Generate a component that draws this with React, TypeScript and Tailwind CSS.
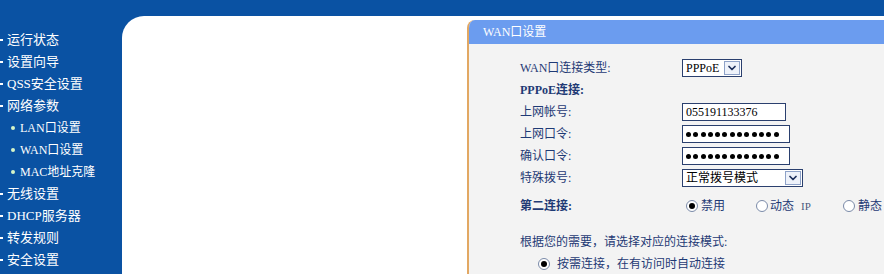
import { ChevronDown } from 'lucide-react';

const MENU: { label: string; sub?: boolean }[] = [
  { label: '运行状态' },
  { label: '设置向导' },
  { label: 'QSS安全设置' },
  { label: '网络参数' },
  { label: 'LAN口设置', sub: true },
  { label: 'WAN口设置', sub: true },
  { label: 'MAC地址克隆', sub: true },
  { label: '无线设置' },
  { label: 'DHCP服务器' },
  { label: '转发规则' },
  { label: '安全设置' },
];

function Select({ value, width }: { value: string; width: string }) {
  return (
    <div className={`flex h-[18px] items-center justify-between border border-[#2a3f6e] bg-white pl-[3px] pr-[1px] ${width}`}>
      <span className="text-[12px] leading-none text-black">{value}</span>
      <span className="flex h-[14px] w-[16px] items-center justify-center border border-[#8ea2c8] bg-[#eef2fa]">
        <ChevronDown className="h-[12px] w-[12px] text-[#1d2f5c]" strokeWidth={3.5} />
      </span>
    </div>
  );
}

function Password() {
  return (
    <div className="flex h-[18px] w-[108px] items-center gap-[2.3px] border border-[#2a3f6e] bg-white pl-[3px]">
      {Array.from({ length: 13 }).map((_, i) => (
        <span key={i} className="h-[5px] w-[5px] rounded-full bg-black" />
      ))}
    </div>
  );
}

function Radio({ checked }: { checked?: boolean }) {
  return (
    <span className="flex h-[12px] w-[12px] items-center justify-center rounded-full border border-[#7a8aa8] bg-white">
      {checked && <span className="h-[6px] w-[6px] rounded-full bg-black" />}
    </span>
  );
}

export default function App() {
  return (
    <div className="h-[274px] w-[884px] overflow-hidden bg-[#0a52a3] font-['Liberation_Serif','Noto_Sans_CJK_SC',serif] text-[12px]">
      {/* top bar */}
      <div className="h-[16px]" />

      <div className="flex h-[258px]">
        {/* sidebar */}
        <div className="w-[122px] shrink-0 pt-[13px] text-white">
          {MENU.map(m => (
            <div key={m.label} className={`flex h-[22px] items-center ${m.sub ? 'pl-[11px]' : 'pl-0'}`}>
              {m.sub ? (
                <span className="mr-[5px] h-[4px] w-[4px] rounded-full bg-[#d6f5c8]" />
              ) : (
                <span className="mr-[4px] h-[2px] w-[3px] bg-white" />
              )}
              <span className={m.sub ? 'text-[12px]' : 'text-[13px]'}>{m.label}</span>
            </div>
          ))}
        </div>

        {/* main white area */}
        <div className="flex-1 rounded-tl-[22px] bg-white pl-[345px] pt-[4px]">
          <div className="w-[430px] overflow-hidden rounded-tl-[8px] border-l-2 border-[#e2a863] bg-[#f3f3f3]">
            <div className="flex h-[24px] items-center bg-[#6b9cef] pl-[14px] text-[12px] text-white">WAN口设置</div>

            <div className="pl-[51px] pt-[13px] text-[#1f3a75]">
              <div className="grid grid-cols-[162px_1fr] auto-rows-[22px] items-center">
                <span>WAN口连接类型:</span>
                <Select value="PPPoE" width="w-[60px]" />

                <span className="font-bold">PPPoE连接:</span>
                <span />

                <span>上网帐号:</span>
                <div className="flex h-[18px] w-[104px] items-center border border-[#2a3f6e] bg-white pl-[3px] text-[12px] text-black">
                  055191133376
                </div>

                <span>上网口令:</span>
                <Password />

                <span>确认口令:</span>
                <Password />

                <span>特殊拨号:</span>
                <Select value="正常拨号模式" width="w-[121px]" />
              </div>

              <div className="grid h-[34px] grid-cols-[162px_1fr] items-center">
                <span className="font-bold">第二连接:</span>
                <div className="flex items-center pl-[4px]">
                  <Radio checked />
                  <span className="ml-[3px] w-[55px]">禁用</span>
                  <Radio />
                  <span className="ml-[2px] w-[73px]">
                    动态 <span className="ml-[4px] text-[11px] text-[#4a5a80]">IP</span>
                  </span>
                  <Radio />
                  <span className="ml-[3px]">静态</span>
                </div>
              </div>

              <div className="mt-[8px] flex h-[22px] items-center">根据您的需要，请选择对应的连接模式:</div>
              <div className="flex h-[22px] items-center pl-[18px]">
                <Radio checked />
                <span className="ml-[7px]">按需连接，在有访问时自动连接</span>
              </div>
            </div>
          </div>
        </div>
      </div>
    </div>
  );
}
